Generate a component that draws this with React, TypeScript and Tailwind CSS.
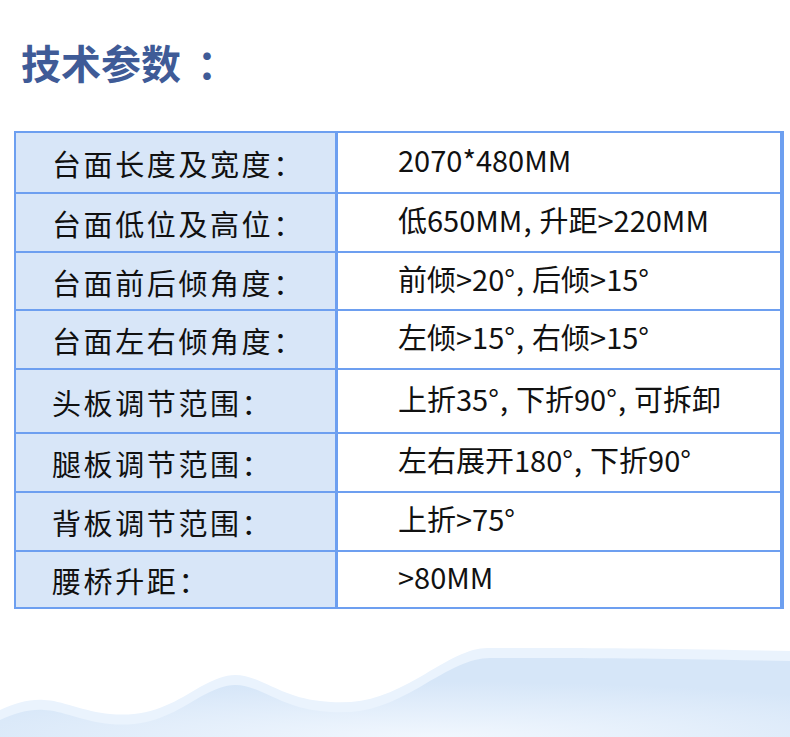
const rows: [string, string][] = [
  ["台面长度及宽度：", "2070*480MM"],
  ["台面低位及高位：", "低650MM,升距>220MM"],
  ["台面前后倾角度：", "前倾>20°,后倾>15°"],
  ["台面左右倾角度：", "左倾>15°,右倾>15°"],
  ["头板调节范围：", "上折35°,下折90°,可拆卸"],
  ["腿板调节范围：", "左右展开180°,下折90°"],
  ["背板调节范围：", "上折>75°"],
  ["腰桥升距：", ">80MM"],
];

const heights = ["h-[59px]", "h-[59px]", "h-[58px]", "h-[59px]", "h-[64px]", "h-[59px]", "h-[59px]", "h-[57px]"];

function Value({ text }: { text: string }) {
  const parts = text.split(",");
  return (
    <span className="text-[29px] leading-none text-[#111]">
      {parts.map((p, i) => (
        <span key={i}>
          {p}
          {i < parts.length - 1 && <span className="ml-[1px] mr-[8px]">,</span>}
        </span>
      ))}
    </span>
  );
}

function Wave() {
  // y coordinates are relative to the top of the svg (page y 637)
  return (
    <svg width="790" height="100" viewBox="0 0 790 100" className="block">
      <defs>
        <radialGradient id="g" cx="0.55" cy="1" r="0.7">
          <stop offset="0" stopColor="#f1f7fe" />
          <stop offset="1" stopColor="#d6e6f8" />
        </radialGradient>
      </defs>
      <path
        d="M0 73 C15 66 30 62 44 63 C60 63 85 75 110 77 C150 81 175 65 200 50 C215 42 225 38 235 38 C260 38 280 60 320 64 C360 69 385 60 420 40 C450 22 470 10 490 11 C530 11 600 10 790 14 L790 100 L0 100 Z"
        fill="#eaf3fd"
      />
      <path
        d="M0 83 C15 76 30 72 44 73 C60 73 85 85 110 87 C150 91 175 75 200 60 C215 52 225 48 235 48 C260 48 280 70 320 74 C360 79 385 70 420 50 C450 32 470 21 490 21 C530 21 600 20 790 24 L790 100 L0 100 Z"
        fill="url(#g)"
      />
    </svg>
  );
}

export default function App() {
  return (
    <div
      className="w-[790px] h-[737px] bg-white overflow-hidden flex flex-col"
      style={{ fontFamily: '"Noto Sans CJK SC", "Noto Sans", sans-serif' }}
    >
      {/* ── Title ── */}
      <div className="pl-[21px] pt-[32px] h-[131px]">
        <h1 className="text-[40px] leading-[60px] font-bold text-[#3f5b97]">
          技术参数<span className="ml-[16px]">：</span>
        </h1>
      </div>

      {/* ── Spec table ── */}
      <div className="ml-[14px] w-[770px] border-t-2 border-l-2 border-b-2 border-r-4 border-[#6d9ff0]">
        {rows.map(([label, value], i) => (
          <div
            key={label}
            className={`flex ${heights[i]} ${i > 0 ? "border-t-2 border-[#6d9ff0]" : ""}`}
          >
            <div className="w-[322px] shrink-0 bg-[#d8e6f8] border-r-[3px] border-[#6d9ff0] flex items-center pl-[36px] pt-[2px]">
              <span className="text-[29px] leading-none tracking-[2.6px] text-[#111]">{label}</span>
            </div>
            <div className="flex-1 flex items-center pl-[60px] pb-[6px]">
              <Value text={value} />
            </div>
          </div>
        ))}
      </div>

      <div className="mt-auto">
        <Wave />
      </div>
    </div>
  );
}
